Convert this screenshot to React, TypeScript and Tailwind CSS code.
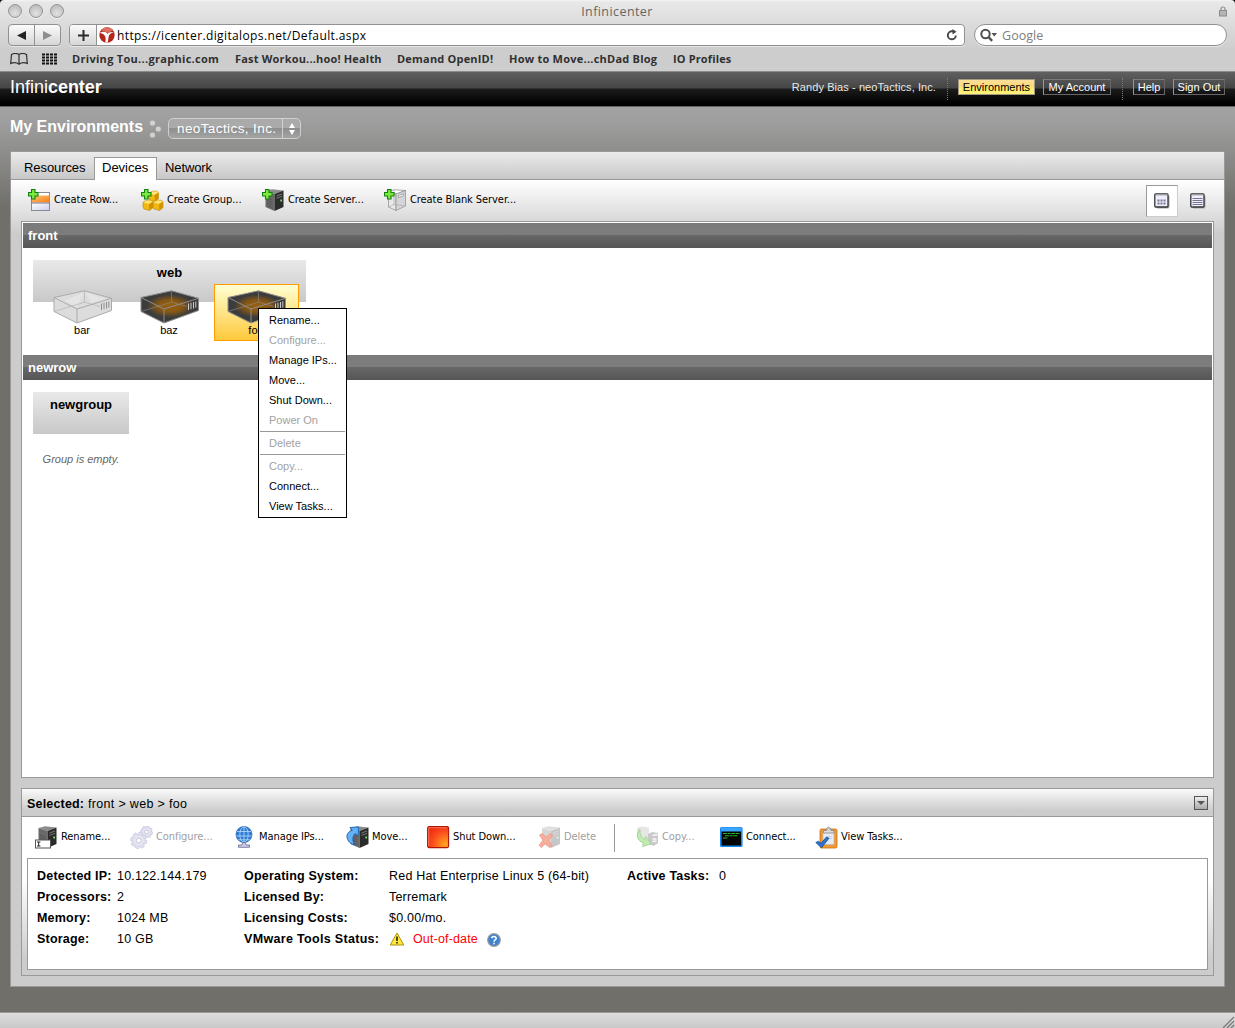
import React from "react";

function Plus() {
  return (
    <path
      d="M3.500 .5h3.500v3h3v3.500h-3v3h-3.500v-3h-3v-3.500h3z"
      fill="#7fe83f"
      stroke="#0f8212"
      strokeWidth="1.100"
    />
  );
}

function Tower({ pale = false }: { pale?: boolean }) {
  return pale ? (
    <g stroke="#8b8b8b" strokeWidth=".7" strokeLinejoin="round">
      <path d="M4.500 2.500L10 .8 21.500 1.500 12 5z" fill="#fff" />
      <path d="M4.500 2.500L12 5v16.500L4.500 18z" fill="#e9e9e9" />
      <path d="M12 5l9.500-3.500v15.500L12 21.500z" fill="#d3d5d8" />
      <path d="M4.500 18l5.500-2.500 11.500 1.500M10 1v14.500" fill="none" stroke="#aaa" />
      <path d="M14.500 6.500l5-1.700v2l-5 1.700z" fill="#fff" />
    </g>
  ) : (
    <g>
      <path d="M3.500 2L10 .3l11.500 1.200L12.500 5z" fill="#8c8c8c" />
      <path d="M3.500 2l9 3v17l-9-4z" fill="#696969" />
      <path d="M12.500 5l9-3.500V18l-9 4z" fill="#2b2b2b" />
      <path d="M14.500 7l5.500-2M14.500 9.300l5.500-2" stroke="#808080" strokeWidth=".9" />
      <path d="M5 9l5.500 2.200M5 11.500l5.500 2.200M5 14l5.500 2.200M5 16.500l5.500 2.200" stroke="#4a4a4a" strokeWidth=".7" />
      <rect x="18.300" y="10.500" width="1.700" height="2" fill="#79e36a" />
    </g>
  );
}

function Svg({ children, className = "" }: { children: React.ReactNode; className?: string }) {
  return (
    <svg width="24" height="24" viewBox="0 0 24 24" className={"block shrink-0 " + className}>
      {children}
    </svg>
  );
}

const CreateRowIcon = () => (
  <Svg>
    <defs>
      <linearGradient id="rowOrange" x1="0" x2="1" y1="0" y2="1">
        <stop offset="0" stopColor="#ffc27a" />
        <stop offset="1" stopColor="#f77f0e" />
      </linearGradient>
      <linearGradient id="rowBlue" x1="0" x2="1" y1="0" y2="1">
        <stop offset="0" stopColor="#fff" />
        <stop offset="1" stopColor="#cfcff2" />
      </linearGradient>
    </defs>
    <rect x="3.500" y="3.500" width="18" height="18" fill="#fff" stroke="#8a8a92" />
    <rect x="4" y="6.500" width="17.500" height="7" fill="url(#rowOrange)" />
    <rect x="4" y="14" width="17" height="7" fill="url(#rowBlue)" />
    <path d="M3.500 14h18" stroke="#777790" />
    <Plus />
  </Svg>
);

function Cube({ x, y }: { x: number; y: number }) {
  return (
    <g transform={`translate(${x} ${y})`}>
      <path d="M0 2.200L4 .2h4l2 1.500v6L6.500 10.500 1 9 0 7z" fill="#f0b810" stroke="#b98206" strokeWidth=".6" />
      <path d="M.3 2.400L4 .5h4l1.700 1.300L6 4z" fill="#ffe473" />
      <path d="M6 4l3.700-2v5.700L6.300 10z" fill="#cf9204" />
    </g>
  );
}

const CreateGroupIcon = () => (
  <Svg>
    <Cube x={7.5} y={2} />
    <Cube x={2} y={11} />
    <Cube x={12} y={11} />
    <Plus />
  </Svg>
);

const CreateServerIcon = () => (
  <Svg>
    <Tower />
    <Plus />
  </Svg>
);

const CreateBlankIcon = () => (
  <Svg>
    <Tower pale />
    <Plus />
  </Svg>
);

const RenameIcon = () => (
  <Svg>
    <g transform="translate(1 0)">
      <Tower />
    </g>
    <rect x="1.500" y="14" width="15" height="8" fill="#fff" stroke="#555" />
    <path d="M3 16h3.400M3 20h3.400M4.700 16v4" stroke="#222" />
  </Svg>
);

function Gear({ x, y, r }: { x: number; y: number; r: number }) {
  return (
    <g transform={`translate(${x} ${y})`}>
      {[0, 45, 90, 135].map((a) => (
        <rect
          key={a}
          x={-r * 0.24}
          y={-r}
          width={r * 0.48}
          height={r * 2}
          rx=".6"
          fill="#e2e2f0"
          stroke="#c6c6dc"
          strokeWidth=".7"
          transform={`rotate(${a + 12})`}
        />
      ))}
      <circle r={r * 0.72} fill="#e6e6f3" stroke="#d4d4e6" strokeWidth=".7" />
      <circle r={r * 0.3} fill="#fff" stroke="#bdbdd6" strokeWidth=".8" />
    </g>
  );
}

const ConfigureIcon = () => (
  <Svg>
    <Gear x={16.500} y={6} r={6} />
    <Gear x={8.700} y={14.500} r={8} />
  </Svg>
);

const GlobeIcon = () => (
  <Svg>
    <circle cx="10" cy="8.500" r="8" fill="#2f7dd6" stroke="#1e5bb0" strokeWidth=".7" />
    <g fill="none" stroke="#bcdcf8" strokeWidth=".8">
      <path d="M3 5.500h14M2.300 10h15.400M4 13.800h12" />
      <ellipse cx="10" cy="8.500" rx="4.200" ry="7.600" />
      <path d="M10 .8v15.400" />
    </g>
    <path d="M9 16.500h2.200l1 2.500h3.300v2.300h-11V19H8z" fill="#ccccee" stroke="#55557a" strokeWidth=".7" />
  </Svg>
);

const MoveIcon = () => (
  <Svg>
    <g transform="translate(1 0)">
      <Tower />
    </g>
    <path
      d="M4 1.500L12.500 1l-.3 9-2.900-2.600C6.500 10 6 14 8.500 19 3 17.500.5 13 1 9.500 1.500 7 3.500 5 6.300 4.300z"
      fill="#62b2f5"
      stroke="#1660b8"
      strokeWidth=".9"
    />
  </Svg>
);

const ShutDownIcon = () => (
  <Svg>
    <defs>
      <radialGradient id="shut" cx=".85" cy=".85" r="1">
        <stop offset="0" stopColor="#ffa51e" />
        <stop offset=".6" stopColor="#fb4e1e" />
        <stop offset="1" stopColor="#ee2c10" />
      </radialGradient>
    </defs>
    <rect x=".6" y=".6" width="21" height="21" rx="1.500" fill="url(#shut)" stroke="#b01505" strokeWidth="1.100" />
    <path d="M1.700 20V1.700H20" fill="none" stroke="#ff9478" strokeWidth=".7" />
  </Svg>
);

const DeleteIcon = () => (
  <Svg>
    <g transform="translate(.5 0)" opacity=".26">
      <Tower />
    </g>
    <path
      d="M1.500 9l3-1.500 3.500 4 4-4 2.500 2-3.800 4.700L14 19.500 11.500 21.500 7.500 17l-4 4.500L1 19.500l4-5.300z"
      fill="#f9ad9c"
      stroke="#f09480"
      strokeWidth=".8"
    />
  </Svg>
);

const CopyIcon = () => (
  <Svg>
    <path d="M1 1.500L6 .5l7 1v10L8 13 1 11z" fill="#e6e6e6" />
    <path d="M12 8l4-2 6 1v10l-4.500 3L12 17z" fill="#c9c9c9" />
    <path d="M16.500 9.500l5-1M16.500 13h4M16.500 15.500l4-.5" stroke="#f8f8f8" strokeWidth="1.300" />
    <path
      d="M4 3C-.8 8 1 15 7.500 17L6.500 20.500 15 18 10 10.500 9 13.500C5.500 12 3.500 8.500 4 3z"
      fill="#c0ebb3"
      stroke="#9ad08c"
      strokeWidth=".8"
    />
  </Svg>
);

const ConnectIcon = () => (
  <Svg>
    <rect x=".8" y="1.800" width="21" height="18.500" rx=".8" fill="#020402" stroke="#1688f0" strokeWidth="1.600" />
    <rect x="1" y="1.500" width="20.600" height="4" fill="#3aa5fb" />
    <path d="M3 7.500h17M5 9.700h13M3 12h5" stroke="#27b827" strokeWidth="1.100" strokeDasharray="4 .6 3 .6" />
  </Svg>
);

const TasksIcon = () => (
  <Svg>
    <rect x="5" y="3" width="17" height="19" rx="1.500" fill="#f29a32" stroke="#c66e0e" strokeWidth=".8" />
    <path d="M8 5.500h11v13H8z" fill="#e6ecf6" stroke="#aeb6c6" strokeWidth=".6" />
    <path d="M8.500 7V4.500h3C11.500 0 16 0 16 4.500h3V7z" fill="#dedede" stroke="#858585" strokeWidth=".8" />
    <circle cx="13.700" cy="3.300" r="1" fill="#fff" stroke="#888" strokeWidth=".5" />
    <path d="M11 10.500h6M11 12.500h6" stroke="#c0c6d4" strokeWidth=".7" />
    <path d="M.8 16.500l2.700-1.200 2.500 2L11.500 11l2.500 1.200L6.500 21.800z" fill="#2f74cc" stroke="#134f9c" strokeWidth=".8" />
  </Svg>
);

function Device({ blank = false, id }: { blank?: boolean; id: string }) {
  return (
    <svg width="60" height="34" viewBox="0 0 60 34" className="ml-px block">
      <defs>
        <radialGradient id={id}>
          <stop offset="0" stopColor="#98600f" />
          <stop offset=".5" stopColor="#8a5812" />
          <stop offset="1" stopColor="#3c3c3c" />
        </radialGradient>
      </defs>
      <path d="M1 7.500L31.500.8 58.500 8.300V20.500L24 33 1 21.500z" fill={blank ? "#dcdcdc" : "#3c3c3c"} />
      {!blank && <ellipse cx="30" cy="16" rx="23" ry="11.500" fill={`url(#${id})`} />}
      {blank && <path d="M31.500 1.500L52 9 38 13zM31 2L12 11l12 6z" fill="#e4e4e4" />}
      <g fill="none" stroke={blank ? "#ababab" : "#8e8e8e"} strokeWidth="1">
        <path d="M1 7.500L31.500.8 58.500 8.300 24 19z" />
        <path d="M1 7.500v14L24 33l34.500-12.500V8.300M24 19v14" />
        <path d="M31.500 1v11.200L1 21.500M31.500 12.200L47 16.500" strokeOpacity=".6" />
      </g>
      <path
        d="M48.500 13.500v6.500M51 12.700v6.500M53.500 12v6.500M55.800 11.400v6.200"
        stroke={blank ? "#8e8e8e" : "#cacaca"}
        strokeWidth="1"
      />
    </svg>
  );
}

function ToolItem({
  icon,
  label,
  w,
  off = "w-[26px]",
  disabled = false,
}: {
  icon: React.ReactNode;
  label: string;
  w: string;
  off?: string;
  disabled?: boolean;
}) {
  return (
    <div className={`flex shrink-0 items-start whitespace-nowrap ${w}`}>
      <div className={`shrink-0 ${off}`}>{icon}</div>
      <span
        className={`font-['DejaVu_Sans_Condensed','DejaVu_Sans',sans-serif] text-[11px] leading-[22px] tracking-[-0.070px] [font-stretch:condensed] ${
          disabled ? "text-[#a0a0a0]" : "text-black"
        }`}
      >
        {label}
      </span>
    </div>
  );
}

function RowHeader({ children }: { children: string }) {
  return (
    <div className="mx-px h-[25px] bg-[linear-gradient(#7b7b7b_0,#7d7d7d_12px,#686868_12px,#555_25px)] pl-[5px] text-[13px] leading-[25px] font-bold text-white">
      {children}
    </div>
  );
}

function HeaderButton({ children, active = false, className }: { children: string; active?: boolean; className: string }) {
  return (
    <div
      className={`flex h-[16px] items-center justify-center border text-[11px] leading-[14px] whitespace-nowrap ${
        active
          ? "border-[#a29a80] bg-[linear-gradient(#fde09a_0,#fbd778_50%,#fbe968_50%,#fff27b)] text-black"
          : "border-[#666] border-t-[#7b7b7b] border-l-[#999] text-white"
      } ${className}`}
    >
      {children}
    </div>
  );
}

function MenuItem({ children, disabled = false }: { children: string; disabled?: boolean }) {
  return <div className={`h-[20px] pl-[10px] leading-[21px] ${disabled ? "text-[#a2a2a2]" : "text-black"}`}>{children}</div>;
}

function Light() {
  return (
    <div className="size-[14px] rounded-full border border-[#959595] bg-[radial-gradient(circle_at_50%_70%,#e2e2e2,#bcbcbc_80%)] shadow-[0_1px_0_#f4f4f4]" />
  );
}

function Chrome() {
  return (
    <div className="bg-black">
      <div className="h-[72px] rounded-t-[4px] border-b border-[#8a8a8a] bg-[linear-gradient(#f4f4f4_0,#e8e8e8_2px,#cdcdcd_50px,#cdcdcd)] font-['Open_Sans','Noto_Sans',sans-serif]">
        <div className="grid h-[24px] grid-cols-[1fr_auto_1fr] items-start px-[8px]">
          <div className="flex gap-[7px] pt-[4px]">
            <Light />
            <Light />
            <Light />
          </div>
          <span className="-ml-px pt-[2px] text-[12.500px] leading-[20px] tracking-[0.420px] text-[#666]">Infinicenter</span>
          <svg width="8" height="11" viewBox="0 0 8 11" className="mt-[6px] justify-self-end">
            <path d="M2 5V3a2 2 0 014 0v2" fill="none" stroke="#8c8c8c" strokeWidth="1.200" />
            <rect x=".5" y="4.500" width="7" height="5.500" fill="#b4b4b4" stroke="#8c8c8c" />
          </svg>
        </div>
        <div className="flex h-[22px] px-[8px]">
          <div className="flex w-[53px] rounded-[4px] border border-[#919191] bg-[linear-gradient(#fbfbfb,#d6d6d6)] shadow-[0_1px_0_#e6e6e6]">
            <div className="flex flex-1 items-center justify-center border-r border-[#919191]">
              <svg width="9" height="9" viewBox="0 0 9 9"><path d="M9 0v9L0 4.500z" fill="#222" /></svg>
            </div>
            <div className="flex flex-1 items-center justify-center">
              <svg width="9" height="9" viewBox="0 0 9 9"><path d="M0 0v9l9-4.500z" fill="#8e8e8e" /></svg>
            </div>
          </div>
          <div className="ml-[8px] flex w-[896px] overflow-hidden rounded-[4px] border border-[#919191] bg-white shadow-[0_1px_0_#e6e6e6]">
            <div className="flex w-[27px] items-center justify-center border-r border-[#919191] bg-[linear-gradient(#fbfbfb,#d6d6d6)]">
              <svg width="11" height="11" viewBox="0 0 11 11"><path d="M5.500 0v11M0 5.500h11" stroke="#2a2a2a" strokeWidth="2" /></svg>
            </div>
            <svg width="16" height="16" viewBox="0 0 16 16" className="mt-[2px] ml-[2px] shrink-0">
              <circle cx="8" cy="8" r="7.700" fill="#b3261b" />
              <path d="M2 3.200A7.700 7.700 0 0114 3.200L9 6z" fill="#d9705f" />
              <path d="M.5 6C4 4 7 4.500 8.500 7c1-2 3.500-2.200 6.500-1.500-3 .5-4.800 1.800-5.300 4.100L8.700 15.500H6.300C7.500 10 6 6.500.5 6z" fill="#fff" />
            </svg>
            <span className="ml-[2px] flex-1 text-[12px] leading-[21px] tracking-[0.380px] text-black">https://icenter.digitalops.net/Default.aspx</span>
            <svg width="12" height="12" viewBox="0 0 12 12" className="mt-[4px] mr-[6px]">
              <path d="M9.800 6.500A4 4 0 116 2.300h2" fill="none" stroke="#444" strokeWidth="1.900" />
              <path d="M6.500 0l4 2.800-4 2.800z" fill="#444" />
            </svg>
          </div>
          <div className="ml-[9px] flex w-[253px] items-center rounded-full border border-[#919191] bg-white pl-[5px] shadow-[0_1px_0_#e6e6e6]">
            <svg width="18" height="14" viewBox="0 0 18 14">
              <circle cx="5.500" cy="6" r="4.200" fill="none" stroke="#505050" strokeWidth="2" />
              <path d="M8.500 9l3.600 3.800" stroke="#505050" strokeWidth="2.400" />
              <path d="M11.500 5h5.500l-2.700 3.400z" fill="#505050" />
            </svg>
            <span className="ml-[4px] pt-px text-[12.500px] leading-[20px] tracking-[0.050px] text-[#808080]">Google</span>
          </div>
        </div>
        <div className="flex h-[25px] items-center pt-px text-[11px] font-bold whitespace-nowrap text-[#303030]">
          <svg width="18" height="12" viewBox="0 0 18 12" className="ml-[10px]">
            <path d="M9 1.500C7 0 3.500.2 1.500 1.500L.7 10.500c2.500-1 6-1 8.300.7 2.300-1.700 5.800-1.700 8.300-.7L16.500 1.500C14.500.2 11 0 9 1.500zv9.500" fill="none" stroke="#303030" strokeWidth="1.200" />
          </svg>
          <svg width="16" height="12" viewBox="0 0 16 12" className="ml-[14px]">
            <path d="M0 1.500h16M0 4.500h16M0 7.500h16M0 10.500h16" stroke="#111" strokeWidth="2" strokeDasharray="3 1" />
          </svg>
          <span className="ml-[14px] w-[163px] tracking-[0.300px]">Driving Tou...graphic.com</span>
          <span className="w-[162px] tracking-[0.180px]">Fast Workou...hoo! Health</span>
          <span className="w-[112px] tracking-[0.200px]">Demand OpenID!</span>
          <span className="w-[164px] tracking-[0.240px]">How to Move...chDad Blog</span>
          <span className="tracking-[0.140px]">IO Profiles</span>
        </div>
      </div>
    </div>
  );
}

function AppHeader() {
  return (
    <header className="flex h-[34px] bg-[linear-gradient(#606060_0,#454545_16px,#1c1c1c_17px,#000_32px)] text-white">
      <div className="ml-[10px] text-[18px] leading-[31px] tracking-[-0.020px]">
        Infini<b>center</b>
      </div>
      <div className="ml-auto flex pt-[7px] pr-[10px]">
        <span className="mr-[11px] text-[11px] leading-[17px] tracking-[0.080px] text-[#e8e8e8]">Randy Bias - neoTactics, Inc.</span>
        <div className="-mt-px mr-[10px] h-[22px] border-l border-dotted border-[#777]" />
        <HeaderButton active className="mr-[8px] w-[77px]">Environments</HeaderButton>
        <HeaderButton className="mr-[11px] w-[68px]">My Account</HeaderButton>
        <div className="-mt-px mr-[10px] h-[22px] border-l border-dotted border-[#777]" />
        <HeaderButton className="mr-[8px] w-[32px]">Help</HeaderButton>
        <HeaderButton className="w-[52px]">Sign Out</HeaderButton>
      </div>
    </header>
  );
}

function ContextMenu() {
  return (
    <div className="absolute top-[86px] left-[236px] z-10 h-[210px] w-[89px] border border-black bg-white pt-px text-[11px] whitespace-nowrap">
      <MenuItem>Rename...</MenuItem>
      <MenuItem disabled>Configure...</MenuItem>
      <MenuItem>Manage IPs...</MenuItem>
      <MenuItem>Move...</MenuItem>
      <MenuItem>Shut Down...</MenuItem>
      <MenuItem disabled>Power On</MenuItem>
      <div className="mx-px mt-px mb-px h-px bg-[#999]" />
      <MenuItem disabled>Delete</MenuItem>
      <div className="mx-px mt-px mb-px h-px bg-[#999]" />
      <MenuItem disabled>Copy...</MenuItem>
      <MenuItem>Connect...</MenuItem>
      <MenuItem>View Tasks...</MenuItem>
    </div>
  );
}

function DeviceCell({ name, blank = false, selected = false }: { name: string; blank?: boolean; selected?: boolean }) {
  return (
    <div
      className={`flex h-[57px] w-[85px] flex-col items-center border pt-[5px] pr-px ${
        selected ? "border-[#ff9c00] bg-[linear-gradient(#ffffd2,#ffc93c)]" : "border-transparent"
      }`}
    >
      <Device blank={blank} id={"glow-" + name} />
      <span className="text-[11px] leading-[13px]">{name}</span>
    </div>
  );
}

function Devices() {
  return (
    <div className="relative h-[557px] border border-[#999] bg-white pt-px">
      <RowHeader>front</RowHeader>
      <div className="mt-[12px] ml-[11px] h-[95px] w-[273px]">
        <div className="h-[42px] bg-[linear-gradient(#e9e9e9,#c8c8c8)] text-center text-[13px] leading-[25px] font-bold">web</div>
        <div className="-mt-[18px] flex gap-[2px] pl-[7px]">
          <DeviceCell name="bar" blank />
          <DeviceCell name="baz" />
          <DeviceCell name="foo" selected />
        </div>
      </div>
      <RowHeader>newrow</RowHeader>
      <div className="mt-[12px] ml-[11px] w-[96px]">
        <div className="h-[42px] bg-[linear-gradient(#e9e9e9,#c8c8c8)] text-center text-[13px] leading-[26px] font-bold">newgroup</div>
        <div className="pt-[17px] text-center text-[11px] leading-[16px] whitespace-nowrap text-[#666] italic">Group is empty.</div>
      </div>
      <ContextMenu />
    </div>
  );
}

function SelectedPanel() {
  return (
    <section className="mt-[10px] h-[188px] border border-[#999] bg-[linear-gradient(#fff_0,#fff_90px,#ccc_170px)] px-[5px]">
      <div className="-mx-[5px] flex h-[28px] items-center justify-between border-b border-[#999] bg-[linear-gradient(#fafafa,#ccc_80%)] px-[5px] text-[12.500px]">
        <div className="pt-[2px] leading-[28px] tracking-[0.320px]">
          <b className="tracking-[0.180px]">Selected:</b> front &gt; web &gt; foo
        </div>
        <div className="flex size-[14px] items-center justify-center border border-[#555] bg-[linear-gradient(#eee,#aaa)]">
          <svg width="8" height="4" viewBox="0 0 8 4"><path d="M0 0h8L4 4z" fill="#555" /></svg>
        </div>
      </div>
      <div className="flex h-[41px] pt-[9px] pl-[7px]">
        <ToolItem w="w-[96px]" off="w-[27px]" icon={<RenameIcon />} label="Rename..." />
        <ToolItem w="w-[104px]" icon={<ConfigureIcon />} label="Configure..." disabled />
        <ToolItem w="w-[112px]" off="w-[25px]" icon={<GlobeIcon />} label="Manage IPs..." />
        <ToolItem w="w-[81px]" icon={<MoveIcon />} label="Move..." />
        <ToolItem w="w-[111px]" icon={<ShutDownIcon />} label="Shut Down..." />
        <ToolItem w="w-[76px]" icon={<DeleteIcon />} label="Delete" disabled />
        <div className="-mt-[2px] mr-[21px] h-[28px] w-px bg-[#999]" />
        <ToolItem w="w-[84px]" icon={<CopyIcon />} label="Copy..." disabled />
        <ToolItem w="w-[95px]" icon={<ConnectIcon />} label="Connect..." />
        <ToolItem w="w-[100px]" icon={<TasksIcon />} label="View Tasks..." />
      </div>
      <div className="grid h-[112px] grid-cols-[80px_127px_145px_238px_92px_1fr] grid-rows-[21px_21px_21px_21px] border border-[#999] bg-white pt-[7px] pl-[9px] text-[12.500px] leading-[21px] tracking-[0.200px]">
        <b>Detected IP:</b><span>10.122.144.179</span><b>Operating System:</b><span>Red Hat Enterprise Linux 5 (64-bit)</span><b>Active Tasks:</b><span>0</span>
        <b>Processors:</b><span>2</span><b>Licensed By:</b><span className="col-span-3">Terremark</span>
        <b>Memory:</b><span>1024 MB</span><b>Licensing Costs:</b><span className="col-span-3">$0.00/mo.</span>
        <b>Storage:</b><span>10 GB</span><b className="tracking-[0.320px]">VMware Tools Status:</b>
        <span className="col-span-3 flex text-[#f00]">
          <svg width="16" height="14" viewBox="0 0 16 14" className="mt-[3px] mr-[8px]">
            <path d="M8 1l6.800 12H1.200z" fill="#ffe83a" stroke="#a89410" strokeLinejoin="round" />
            <path d="M8 4.500v4.500M8 10v1.600" stroke="#222" strokeWidth="1.600" />
          </svg>
          <span className="tracking-[0.150px]">Out-of-date</span>
          <svg width="14" height="14" viewBox="0 0 14 14" className="mt-[4px] ml-[9px]">
            <circle cx="7" cy="7" r="6.300" fill="#3d82d0" stroke="#9b9b9b" strokeWidth="1.200" />
            <path d="M4.800 5.300C5 3 9.300 3 9.200 5.400 9.100 7 7 6.900 7 8.700M7 9.800v1.400" fill="none" stroke="#fff" strokeWidth="1.500" />
          </svg>
        </span>
      </div>
    </section>
  );
}

export default function App() {
  return (
    <div className="flex h-[1028px] w-[1235px] flex-col overflow-hidden bg-[#706f6a] font-['Liberation_Sans',Arial,sans-serif] text-black">
      <Chrome />
      <AppHeader />
      <main className="flex-1 border-t border-[#5f5f5f] bg-[linear-gradient(#a2a2a2_0,#9e9e9e_15px,#706f6a_100px)] px-[10px]">
        <div className="flex h-[44px] items-start text-white">
          <h1 className="w-[139px] text-[16px] leading-[40px] font-bold tracking-[-0.020px] whitespace-nowrap">My Environments</h1>
          <svg width="12" height="18" viewBox="0 0 12 18" className="mt-[13px]">
            <g fill="#d2d2d2"><circle cx="3.500" cy="3" r="2.600" /><circle cx="9.300" cy="9" r="2.600" /><circle cx="3.500" cy="15" r="2.600" /></g>
          </svg>
          <div className="mt-[11px] ml-[7px] flex h-[21px] w-[133px] rounded-[5px] border border-[#d0d0d0] bg-[linear-gradient(#aaa_0,#aaa_50%,#8f8f8f_50%,#a4a4a4)] pl-[8px]">
            <span className="w-[105px] text-[13.500px] leading-[19px] tracking-[0.400px] whitespace-nowrap">neoTactics, Inc.</span>
            <div className="flex flex-1 items-center justify-center border-l border-[#d0d0d0]">
              <svg width="6" height="12" viewBox="0 0 6 12"><path d="M3 0l3 5H0zM3 12L0 7h6z" fill="#fff" /></svg>
            </div>
          </div>
        </div>
        <div className="h-[836px] border border-[#999] bg-[#ccc]">
          <nav className="flex h-[28px] border-b border-[#999] bg-[linear-gradient(#ebebeb,#c8c8c8)] text-[13px] leading-[32px]">
            <span className="w-[83px] pl-[13px] tracking-[-0.080px]">Resources</span>
            <span className="mt-[5px] h-[23px] w-[63px] border border-b-0 border-[#999] bg-white pl-[7px] leading-[20px]">Devices</span>
            <span className="pl-[8px] tracking-[-0.100px]">Network</span>
          </nav>
          <div className="h-[806px] bg-[linear-gradient(#fff_0,#ccc_54px)] px-[10px]">
            <div className="flex h-[41px] pt-[9px] pl-[7px]">
              <ToolItem w="w-[113px]" icon={<CreateRowIcon />} label="Create Row..." />
              <ToolItem w="w-[121px]" icon={<CreateGroupIcon />} label="Create Group..." />
              <ToolItem w="w-[122px]" icon={<CreateServerIcon />} label="Create Server..." />
              <ToolItem w="w-[140px]" icon={<CreateBlankIcon />} label="Create Blank Server..." />
              <div className="-mt-[4px] mr-px ml-auto flex">
                {[true, false].map((grid) => (
                  <div
                    key={String(grid)}
                    className={`flex h-[32px] items-center justify-center border ${
                      grid ? "mr-[4px] w-[32px] border-[#ccc] border-t-[#999] border-l-[#999] bg-white" : "-mr-px w-[32px] border-transparent"
                    }`}
                  >
                    <svg width="16" height="16" viewBox="0 0 16 16">
                      <path d="M3 3h12.500v11l-1 1.500H3z" fill="#aaa" />
                      <rect x=".8" y=".8" width="13.200" height="13.200" rx="1" fill="#eeeeff" stroke="#333" strokeWidth="1.300" />
                      <path d="M1.500 2h12" stroke="#aaa" strokeWidth="1" />
                      {grid ? (
                        <path d="M3.500 7.500h8M3.500 10.500h8" stroke="#77778c" strokeWidth="2" strokeDasharray="2 1" />
                      ) : (
                        <path d="M2.500 5.500h10M2.500 7.500h10M2.500 9.500h10M2.500 11.500h10" stroke="#77778c" strokeWidth="1" />
                      )}
                    </svg>
                  </div>
                ))}
              </div>
            </div>
            <Devices />
            <SelectedPanel />
          </div>
        </div>
      </main>
      <footer className="flex h-[16px] items-end justify-end border-t border-[#999] bg-[linear-gradient(#dedede,#c8c8c8)]">
        <svg width="13" height="12" viewBox="0 0 13 12"><path d="M1 12L12 1M5 12l7-7M9 12l3-3" stroke="#777" strokeWidth="1.200" /></svg>
      </footer>
    </div>
  );
}
